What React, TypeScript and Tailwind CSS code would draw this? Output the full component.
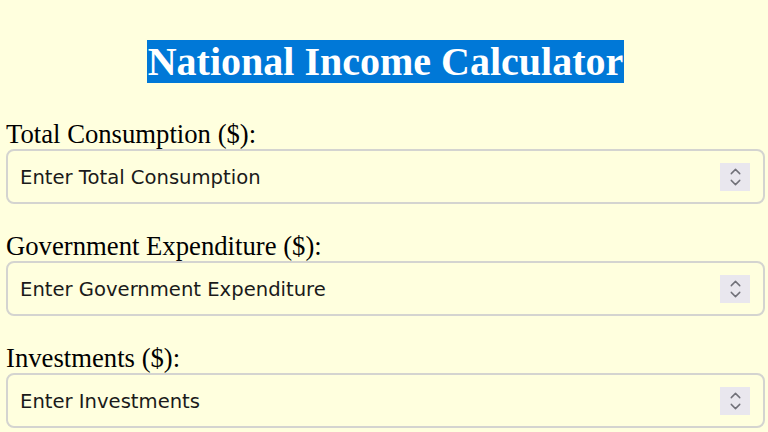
import { ChevronUp, ChevronDown } from "lucide-react";

const fields = [
  { label: "Total Consumption ($):", placeholder: "Enter Total Consumption" },
  { label: "Government Expenditure ($):", placeholder: "Enter Government Expenditure" },
  { label: "Investments ($):", placeholder: "Enter Investments" },
];

function Spinner() {
  return (
    <div className="flex flex-col items-center justify-center w-[30px] h-[28px] bg-[#e9e7ee] text-[#707078]">
      <ChevronUp size={17} strokeWidth={2} className="-mb-[3px]" />
      <ChevronDown size={17} strokeWidth={2} className="-mt-[3px]" />
    </div>
  );
}

export default function App() {
  return (
    <div className="min-h-screen bg-[#ffffde] pl-[6px] pr-[3px] pt-[40px] font-['Liberation_Serif',serif] text-black">
      <div className="flex justify-center">
        <h1 className="bg-[#0078d7] text-white font-bold text-[40px] leading-[43px] px-[1px]">
          National Income Calculator
        </h1>
      </div>
      <div className="mt-[36px] flex flex-col gap-[27px]">
        {fields.map((f) => (
          <div key={f.label} className="flex flex-col">
            <label className="text-[26.7px] leading-[30px]">{f.label}</label>
            <div className="flex items-center h-[55px] border-2 border-[#d4d4d0] rounded-[8px] pl-[12px] pr-[13px]">
              <span className="flex-1 pt-[3px] font-['DejaVu_Sans',sans-serif] text-[19.6px] text-[#1a1a1a]">
                {f.placeholder}
              </span>
              <Spinner />
            </div>
          </div>
        ))}
      </div>
    </div>
  );
}
